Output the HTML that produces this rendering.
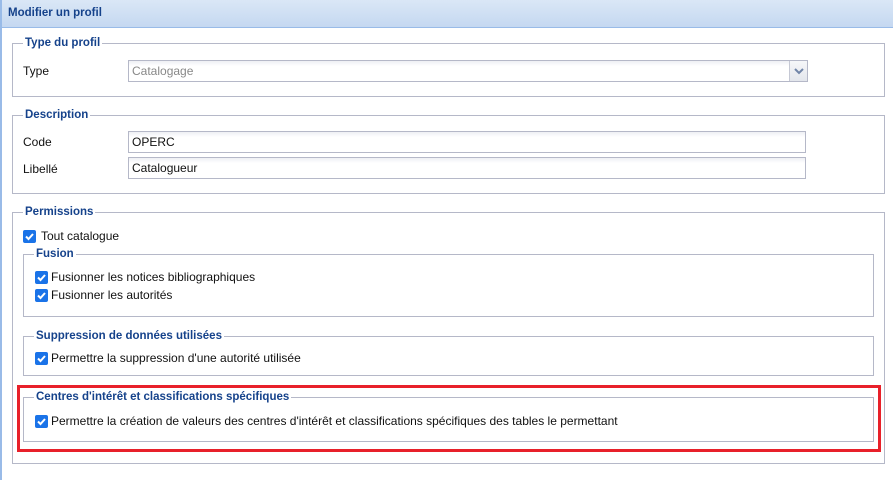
<!DOCTYPE html>
<html><head><meta charset="utf-8"><style>
*{box-sizing:border-box;margin:0;padding:0}
body{width:893px;height:480px;background:#fff;position:relative;overflow:hidden;font-family:"Liberation Sans",sans-serif;font-size:12px;color:#111}
.a{position:absolute}
.hdr{left:0;top:0;width:893px;height:28px;background:linear-gradient(#dae7f6,#cddef3 60%,#c5d8f1);border-bottom:1px solid #99bbe8;border-left:2px solid #99bbe8}
.hdr span{position:absolute;left:6px;top:7px;font-weight:bold;font-size:11.5px;color:#15428b}
.lb{left:0;top:28px;width:2px;height:452px;background:#99bbe8}
.fs{border:1px solid #b5b8c8}
.lg{background:#fff;padding:0 2px;font-weight:bold;font-size:11.5px;color:#15428b;line-height:13px}
.inp{border:1px solid #b5b8c8;background:linear-gradient(#eef0f4,#fff 5px);height:22px;padding:3px 3px;line-height:14px}
.cb{width:13px;height:13px;border-radius:2px;background:#1a73e8}
.cb svg{position:absolute;left:0;top:0}
</style></head><body>
<div class="a hdr"><span>Modifier un profil</span></div>
<div class="a lb"></div>

<div class="a fs" style="left:12px;top:43px;width:873px;height:54px"></div>
<div class="a lg" style="left:23px;top:37px">Type du profil</div>
<div class="a" style="left:23px;top:64px">Type</div>
<div class="a inp" style="left:128px;top:60px;width:680px;height:22px;color:#888">Catalogage</div>
<div class="a" style="left:789px;top:61px;width:18px;height:20px;border-left:1px solid #c5c8d4;background:linear-gradient(#f6f7f9,#e3e6ec)"><svg width="18" height="20"><path d="M5 8 L9 12 L13 8" stroke="#7185a8" stroke-width="2" fill="none"/></svg></div>

<div class="a fs" style="left:12px;top:115px;width:873px;height:79px"></div>
<div class="a lg" style="left:23px;top:109px">Description</div>
<div class="a" style="left:23px;top:135px">Code</div>
<div class="a inp" style="left:128px;top:131px;width:678px">OPERC</div>
<div class="a" style="left:23px;top:162px">Libellé</div>
<div class="a inp" style="left:128px;top:157px;width:678px">Catalogueur</div>

<div class="a fs" style="left:12px;top:212px;width:873px;height:252px"></div>
<div class="a lg" style="left:23px;top:206px">Permissions</div>
<div class="a cb" style="left:23px;top:230px"><svg width="13" height="13"><path d="M3 6.5 L5.5 9 L10 4" stroke="#fff" stroke-width="2" fill="none"/></svg></div>
<div class="a" style="left:41px;top:229px">Tout catalogue</div>

<div class="a fs" style="left:23px;top:254px;width:851px;height:63px"></div>
<div class="a lg" style="left:34px;top:248px">Fusion</div>
<div class="a cb" style="left:35px;top:271px"><svg width="13" height="13"><path d="M3 6.5 L5.5 9 L10 4" stroke="#fff" stroke-width="2" fill="none"/></svg></div>
<div class="a" style="left:51px;top:270px">Fusionner les notices bibliographiques</div>
<div class="a cb" style="left:35px;top:289px"><svg width="13" height="13"><path d="M3 6.5 L5.5 9 L10 4" stroke="#fff" stroke-width="2" fill="none"/></svg></div>
<div class="a" style="left:51px;top:288px">Fusionner les autorités</div>

<div class="a fs" style="left:23px;top:336px;width:851px;height:40px"></div>
<div class="a lg" style="left:34px;top:330px">Suppression de données utilisées</div>
<div class="a cb" style="left:35px;top:352px"><svg width="13" height="13"><path d="M3 6.5 L5.5 9 L10 4" stroke="#fff" stroke-width="2" fill="none"/></svg></div>
<div class="a" style="left:51px;top:351px">Permettre la suppression d'une autorité utilisée</div>

<div class="a" style="left:17px;top:385px;width:864px;height:67px;border:3px solid #e8202a"></div>
<div class="a fs" style="left:23px;top:397px;width:851px;height:45px"></div>
<div class="a lg" style="left:34px;top:391px">Centres d'intérêt et classifications spécifiques</div>
<div class="a cb" style="left:35px;top:415px"><svg width="13" height="13"><path d="M3 6.5 L5.5 9 L10 4" stroke="#fff" stroke-width="2" fill="none"/></svg></div>
<div class="a" style="left:51px;top:414px">Permettre la création de valeurs des centres d'intérêt et classifications spécifiques des tables le permettant</div>
</body></html>
